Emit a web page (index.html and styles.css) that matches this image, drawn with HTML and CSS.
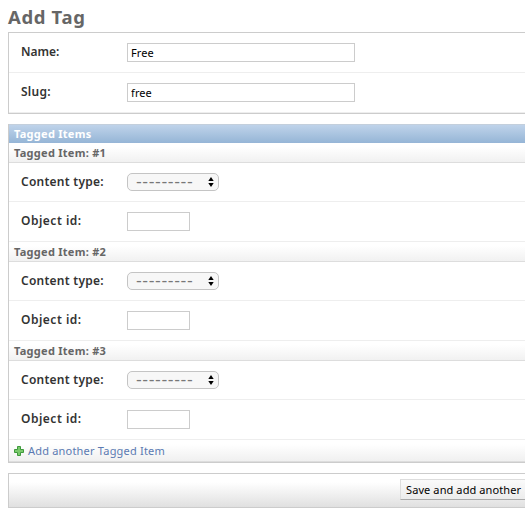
FILE: index.html
```html
<!DOCTYPE html>
<html lang="en">
<head>
<meta charset="utf-8">
<title>Add Tag</title>
<link rel="stylesheet" href="styles.css">
</head>
<body>
<main class="content">
  <h1>Add Tag</h1>
  <form>
    <fieldset class="module">
      <div class="row"><label class="tight">Name:</label><input class="text wide" type="text" value="Free"></div>
      <div class="row"><label>Slug:</label><input class="text wide" type="text" value="free"></div>
    </fieldset>
    <section class="module inline-group">
      <h2>Tagged Items</h2>
      <h3>Tagged Item: #1</h3>
      <div class="row type"><label>Content type:</label><div class="select"><span>---------</span><svg width="6" height="10" viewBox="0 0 6 10"><path d="M3 0 5.7 4H.3zM3 10 .3 6h5.4z"/></svg></div></div>
      <div class="row"><label class="loose">Object id:</label><input class="text short" type="text"></div>
      <h3>Tagged Item: #2</h3>
      <div class="row type"><label>Content type:</label><div class="select"><span>---------</span><svg width="6" height="10" viewBox="0 0 6 10"><path d="M3 0 5.7 4H.3zM3 10 .3 6h5.4z"/></svg></div></div>
      <div class="row"><label class="loose">Object id:</label><input class="text short" type="text"></div>
      <h3>Tagged Item: #3</h3>
      <div class="row type"><label>Content type:</label><div class="select"><span>---------</span><svg width="6" height="10" viewBox="0 0 6 10"><path d="M3 0 5.7 4H.3zM3 10 .3 6h5.4z"/></svg></div></div>
      <div class="row"><label class="loose">Object id:</label><input class="text short" type="text"></div>
      <div class="add-row">
        <svg width="10" height="10" viewBox="0 0 10 10"><path d="M3.5.5h3v3h3v3h-3v3h-3v-3h-3v-3h3z" fill="#7ac96c" stroke="#3f9a3c"/></svg>
        <a>Add another Tagged Item</a>
      </div>
    </section>
    <div class="submit-row"><button type="button">Save and add another</button></div>
  </form>
</main>
</body>
</html>
```
FILE: styles.css
```css
* { box-sizing: border-box; }
body {
  margin: 0;
  background: #fff;
  color: #333;
  font: 12px/16px "Lucida Grande", "Noto Sans", "DejaVu Sans", sans-serif;
}
.content { padding-left: 8px; }
h1 {
  margin: 0;
  height: 32px;
  padding-top: 6px;
  font-size: 18.5px;
  line-height: 21px;
  font-weight: 700;
  letter-spacing: .65px;
  color: #666;
}
h2, h3 { margin: 0; padding-left: 5px; font-size: 11px; font-weight: 700; letter-spacing: .27px; }
.module {
  min-width: 0;
  margin: 0 0 10px;
  padding: 0;
  border: 1px solid #ccc;
  border-right: 0;
  background: #fff;
}
.row {
  display: flex;
  align-items: flex-start;
  height: 40px;
  padding: 10px 0 0 12px;
  border-bottom: 1px solid #eee;
}
.row.type { height: 39px; }
label {
  width: 106px;
  padding-top: 1px;
  font-weight: 600;
  letter-spacing: .25px;
  white-space: nowrap;
}
label.tight { letter-spacing: 0; }
label.loose { letter-spacing: .5px; }
.text {
  height: 19px;
  margin: 0;
  padding: 1px 3px;
  border: 1px solid #ccc;
  border-radius: 0;
  background: #fff;
  color: #000;
  font: 11px/14px "Lucida Grande", "Noto Sans", sans-serif;
  letter-spacing: .1px;
}
.wide { width: 228px; }
.short { width: 63px; }
.inline-group { border-top: 0; }
h2 {
  height: 19px;
  line-height: 18px;
  color: #fff;
  background: linear-gradient(#bfd3ea, #95b5d6);
  border-top: 1px solid #c3cfdc;
}
h3 {
  height: 20px;
  line-height: 20px;
  color: #666;
  background: linear-gradient(#fff 20%, #f1f1f1);
  border-bottom: 1px solid #ddd;
}
.select {
  display: flex;
  align-items: center;
  justify-content: space-between;
  width: 92px;
  height: 18px;
  padding: 0 4px 0 8px;
  border: 1px solid #c4c4c4;
  border-radius: 5px;
  background: #f7f7f7;
  color: #777;
}
.select span {
  font: 16px/16px "DejaVu Sans", sans-serif;
  letter-spacing: .6px;
}
.add-row {
  display: flex;
  align-items: center;
  gap: 4px;
  height: 22px;
  padding-left: 5px;
  border-bottom: 1px solid #ddd;
  background: linear-gradient(#fff 20%, #f0f0f0);
}
.add-row a { color: #5b7ab2; font-size: 11px; letter-spacing: .2px; }
.submit-row {
  display: flex;
  justify-content: flex-end;
  height: 35px;
  padding-top: 5px;
  border: 1px solid #ccc;
  border-right: 0;
  background: linear-gradient(#fff 25%, #e0e0e0);
}
button {
  width: 125px;
  height: 21px;
  margin: 0;
  padding: 0 0 0 5px;
  border: 1px solid #ddd;
  border-right: 0;
  border-bottom-color: #aaa;
  border-radius: 0;
  background: linear-gradient(#fafafa, #ececec);
  color: #000;
  text-align: left;
  white-space: nowrap;
  font: 11px/18px "Lucida Grande", "Noto Sans", sans-serif;
  letter-spacing: .1px;
}
```
